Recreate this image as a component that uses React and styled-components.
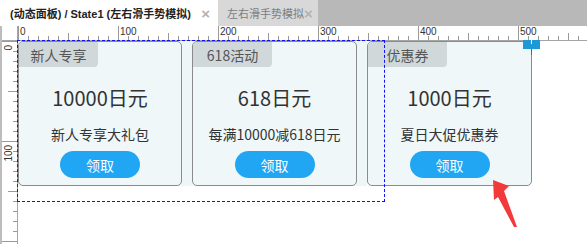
import React from 'react'
import styled, { createGlobalStyle } from 'styled-components'

const GlobalStyle = createGlobalStyle`
  html, body {
    margin: 0;
    padding: 0;
    background: #ffffff;
    font-family: "Noto Sans CJK SC", "Noto Sans", sans-serif;
  }
`

const cards = [
  { tag: '新人专享', amount: '10000日元', desc: '新人专享大礼包', width: 164 },
  { tag: '618活动', amount: '618日元', desc: '每满10000减618日元', width: 165 },
  { tag: '优惠券', amount: '1000日元', desc: '夏日大促优惠券', width: 165 },
]

function HorizontalTicks() {
  const ticks = []
  for (let i = -10; i <= 560; i += 10) {
    const x = i + 0.5
    const len = i % 100 === 0 ? 14 : i % 50 === 0 ? 7 : 4
    ticks.push(<line key={i} x1={x} x2={x} y1={14 - len} y2={14} stroke="#9a9a9a" strokeWidth="1" />)
    if (i % 100 === 0 && i >= 0) {
      ticks.push(
        <text key={'t' + i} x={i + 2} y={9} fontSize="10" fill="#333" fontFamily="Liberation Sans, sans-serif">{i}</text>
      )
    }
  }
  return (
    <svg width="569" height="14" style={{ display: 'block' }}>
      {ticks}
    </svg>
  )
}

function VerticalTicks() {
  const ticks = []
  for (let i = 0; i <= 200; i += 10) {
    const y = i + 0.5
    const len = i % 100 === 0 ? 15 : i % 50 === 0 ? 9 : 4
    ticks.push(<line key={i} x1={15 - len} x2={15} y1={y} y2={y} stroke="#9a9a9a" strokeWidth="1" />)
    if (i % 100 === 0 && i < 200) {
      ticks.push(
        <text key={'t' + i} x={0} y={0} fontSize="10" fill="#333" fontFamily="Liberation Sans, sans-serif"
          transform={`translate(10 ${i + 4 + String(i).length * 5.5}) rotate(-90)`}>{i}</text>
      )
    }
  }
  return (
    <svg width="15" height="203" style={{ display: 'block' }}>
      {ticks}
    </svg>
  )
}

export default function App() {
  return (
    <>
      <GlobalStyle />
      <Page>
        <TabBar>
          <Tab active>
            <TabLabel active>(动态面板) / State1 (左右滑手势模拟)</TabLabel>
            <Close>×</Close>
          </Tab>
          <Tab>
            <TabLabel>左右滑手势模拟</TabLabel>
            <Close>×</Close>
          </Tab>
        </TabBar>
        <Workspace>
          <RulerRow>
            <Corner />
            <HorizontalTicks />
          </RulerRow>
          <Body>
            <VRuler>
              <VerticalTicks />
            </VRuler>
            <Canvas>
              <CardRow>
                {cards.map((c) => (
                  <Card key={c.tag} $w={c.width}>
                    <Tag>{c.tag}</Tag>
                    <Amount>{c.amount}</Amount>
                    <Desc>{c.desc}</Desc>
                    <Button>领取</Button>
                  </Card>
                ))}
              </CardRow>
              <Selection />
              <Marker />
              <Arrow width="40" height="60" viewBox="0 0 40 60">
                <polygon points="5,5 21,11 16,16 29,52 26,52 10,22 6,25" fill="#f23a3a" />
              </Arrow>
            </Canvas>
          </Body>
        </Workspace>
      </Page>
    </>
  )
}

const Page = styled.div`
  width: 587px;
  height: 244px;
  overflow: hidden;
  display: flex;
  flex-direction: column;
  background: #fff;
`

const TabBar = styled.div`
  display: flex;
  height: 26px;
  background: #b8b8b8;
`

const Tab = styled.div`
  display: flex;
  align-items: center;
  justify-content: space-between;
  box-sizing: border-box;
  width: ${(p) => (p.active ? '218px' : '100px')};
  padding: ${(p) => (p.active ? '0 8px 0 10px' : '0 8px 0 9px')};
  background: ${(p) => (p.active ? '#ffffff' : '#d8d8d8')};
`

const TabLabel = styled.span`
  font-family: "Liberation Sans", "Noto Sans CJK SC", sans-serif;
  font-size: 11px;
  font-weight: ${(p) => (p.active ? 700 : 400)};
  color: ${(p) => (p.active ? '#222' : '#7d7d7d')};
  white-space: nowrap;
`

const Close = styled.span`
  flex: none;
  font-family: "Liberation Sans", sans-serif;
  font-size: 15px;
  font-weight: 700;
  color: #b3b3b3;
  line-height: 1;
`

const Workspace = styled.div`
  flex: 1;
  display: flex;
  flex-direction: column;
  border-left: 2px solid #bdbdbd;
`

const RulerRow = styled.div`
  display: flex;
  height: 14px;
  border-bottom: 1px solid #a5a5a5;
  background: #fff;
`

const Corner = styled.div`
  width: 15px;
  flex: none;
  border-right: 1px solid #a5a5a5;
`

const Body = styled.div`
  flex: 1;
  display: flex;
`

const VRuler = styled.div`
  width: 15px;
  flex: none;
  border-right: 1px solid #a5a5a5;
  background: #fff;
`

const Canvas = styled.div`
  position: relative;
  flex: 1;
  background: #fff;
`

const CardRow = styled.div`
  display: flex;
  gap: 10px;
  height: 145px;
  background: linear-gradient(to right, #eef6f8 349px, transparent 349px);
`

const Card = styled.div`
  box-sizing: border-box;
  width: ${(p) => p.$w}px;
  height: 145px;
  display: flex;
  flex-direction: column;
  align-items: center;
  background: #eff7f9;
  border: 1px solid #8b8b8b;
  border-radius: 5px;
  overflow: hidden;
`

const Tag = styled.div`
  align-self: flex-start;
  width: 79px;
  height: 25px;
  display: flex;
  align-items: center;
  justify-content: center;
  background: #d1d8da;
  border-radius: 0 0 4px 0;
  font-size: 14px;
  color: #555;
`

const Amount = styled.div`
  margin-top: 17px;
  font-size: 20px;
  line-height: 28px;
  color: #333;
`

const Desc = styled.div`
  margin-top: 12px;
  font-size: 14px;
  line-height: 20px;
  color: #333;
  white-space: nowrap;
`

const Button = styled.div`
  margin-top: 7px;
  width: 80px;
  height: 27px;
  border-radius: 14px;
  background: #21a6f4;
  color: #fff;
  font-size: 14px;
  display: flex;
  align-items: center;
  justify-content: center;
`

const Selection = styled.div`
  position: absolute;
  left: -1px;
  top: -1px;
  width: 368px;
  height: 162px;
  box-sizing: border-box;
  border: 1px dashed #1010ff;
  pointer-events: none;
`

const Marker = styled.div`
  position: absolute;
  left: 505px;
  top: -1px;
  width: 17px;
  height: 9px;
  background: #1c9ad8;
  &::before {
    content: '';
    position: absolute;
    left: 8px;
    top: 0;
    width: 1px;
    height: 4px;
    background: #fff;
  }
  &::after {
    content: '';
    position: absolute;
    left: 8px;
    top: 9px;
    width: 1px;
    height: 6px;
    background: #666;
  }
`

const Arrow = styled.svg`
  position: absolute;
  left: 470px;
  top: 134px;
`
